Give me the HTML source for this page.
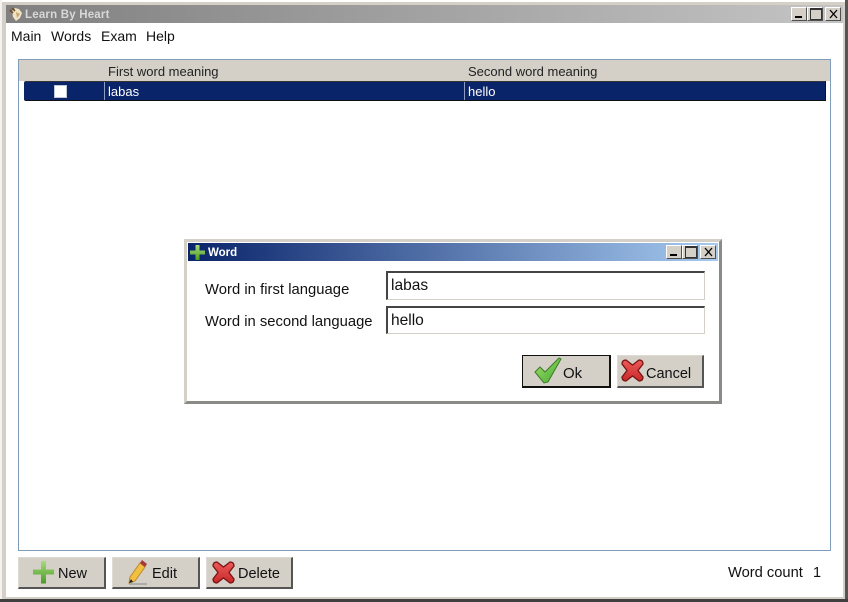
<!DOCTYPE html>
<html><head><meta charset="utf-8"><style>
html,body{margin:0;padding:0;width:848px;height:602px;overflow:hidden;background:#fff}
*{box-sizing:border-box}
div,span{position:absolute;white-space:nowrap}
body{font-family:"Liberation Sans",sans-serif;font-size:14px;color:#111}
.t{line-height:18px;height:18px}
.wb{background:#d4d0c8;border:1px solid;border-color:#fff #505050 #505050 #fff;width:16px;height:14px}
.btn{background:#d4d0c8;border-top:1px solid #dedbd4;border-left:1px solid #dedbd4;border-right:2px solid #555;border-bottom:2px solid #555;height:32px}
svg{position:absolute;overflow:visible}
</style></head><body>
<svg style="left:0;top:0" width="0" height="0"><defs>
<linearGradient id="g" x1="0" y1="0" x2="0" y2="1"><stop offset="0" stop-color="#a6dc78"/><stop offset="1" stop-color="#4a9a28"/></linearGradient>
<linearGradient id="c" x1="0" y1="0" x2="1" y2="1"><stop offset="0" stop-color="#a8e070"/><stop offset="1" stop-color="#3fa82c"/></linearGradient>
<linearGradient id="r" x1="0" y1="0" x2="0" y2="1"><stop offset="0" stop-color="#ee5a5a"/><stop offset="1" stop-color="#c82828"/></linearGradient>
</defs></svg>
<div style="left:0;top:0;width:848px;height:602px;background:#d4d0c8"></div>
<div style="left:0;top:0;width:848px;height:2px;background:#fff"></div>
<div style="left:0;top:0;width:2px;height:602px;background:#f4f3f0"></div>
<div style="left:845px;top:0;width:3px;height:602px;background:#555"></div>
<div style="left:0;top:599px;width:848px;height:3px;background:#404040"></div>
<div style="left:6px;top:5px;width:837px;height:18px;background:linear-gradient(90deg,#808080,#c4c4c4)"></div>
<div style="left:6px;top:23px;width:837px;height:574px;background:#fff"></div>

<svg style="left:8px;top:6px" width="16" height="16" viewBox="0 0 16 16"><path d="M4 5 L7 2 L11 3 L14 7 L12 12 L8 15 L5 11 Z" fill="#efe3c4"/><path d="M2 4 L5 7 M4 2 L7 5" stroke="#6b4a2a" stroke-width="1.600"/><path d="M8 6 L12 8 L9 12Z" fill="#caa46f"/></svg>
<div class="t" style="left:25px;top:6px;font-size:11.500px;font-weight:bold;color:#d8d8d8;line-height:18px;letter-spacing:.2px">Learn By Heart</div>

<div class="wb" style="left:791px;top:7px"><span style="left:3px;top:8px;width:7px;height:2px;background:#000"></span></div>
<div class="wb" style="left:807px;top:7px"><span style="left:2px;top:0;width:12px;height:12px;border:1px solid #333;border-top-width:2px"></span></div>
<div class="wb" style="left:825px;top:7px"><svg style="left:3px;top:2px" width="9" height="8"><path d="M1 0 L8 8 M8 0 L1 8" stroke="#000" stroke-width="1.300"/></svg></div>

<div class="t" style="left:11px;top:27px">Main</div>
<div class="t" style="left:51px;top:27px">Words</div>
<div class="t" style="left:101px;top:27px">Exam</div>
<div class="t" style="left:146px;top:27px">Help</div>

<div style="left:18px;top:59px;width:813px;height:492px;border:1px solid #7f9db9;background:#fff"></div>
<div style="left:19px;top:60px;width:811px;height:21px;background:#d4d0c8"></div>
<div class="t" style="left:108px;top:63px;font-size:13px;color:#222">First word meaning</div>
<div class="t" style="left:468px;top:63px;font-size:13px;color:#222">Second word meaning</div>
<div style="left:24px;top:81px;width:801px;height:20px;background:#0a246a;border-top:1px solid #333;border-bottom:1px solid #111;border-radius:2px 0 0 2px"></div>
<div style="left:104px;top:82px;width:1px;height:18px;background:#8f9cc0"></div>
<div style="left:464px;top:82px;width:1px;height:18px;background:#8f9cc0"></div>
<div style="left:825px;top:81px;width:1px;height:20px;background:#111"></div>
<div style="left:54px;top:85px;width:13px;height:13px;background:#fff;border:1px solid #c0c8d8"></div>
<div class="t" style="left:108px;top:83px;font-size:13px;color:#fff">labas</div>
<div class="t" style="left:468px;top:83px;font-size:13px;color:#fff">hello</div>

<!-- dialog -->
<div style="left:184px;top:239px;width:538px;height:165px;background:#fff;border:3px solid #d4d0c8;border-right:3px solid #8a8a86;border-bottom:3px solid #8a8a86"></div>
<div style="left:188px;top:243px;width:530px;height:18px;background:linear-gradient(90deg,#0a246a,#a6caf0)"></div>
<svg style="left:190px;top:245px" width="15" height="15"><path d="M5.500 0h4v5.500h5.500v4h-5.500v5.500h-4v-5.500h-5.500v-4h5.500z" fill="url(#g)"/></svg>
<div class="t" style="left:208px;top:244px;font-size:11.500px;font-weight:bold;color:#fff">Word</div>
<div class="wb" style="left:666px;top:245px"><span style="left:3px;top:8px;width:7px;height:2px;background:#000"></span></div>
<div class="wb" style="left:682px;top:245px"><span style="left:2px;top:0;width:12px;height:12px;border:1px solid #333;border-top-width:2px"></span></div>
<div class="wb" style="left:700px;top:245px"><svg style="left:3px;top:2px" width="9" height="8"><path d="M1 0 L8 8 M8 0 L1 8" stroke="#000" stroke-width="1.300"/></svg></div>

<div class="t" style="left:205px;top:281px;font-size:14.800px;letter-spacing:.03px">Word in first language</div>
<div class="t" style="left:205px;top:313px;font-size:14.800px">Word in second language</div>
<div style="left:386px;top:271px;width:319px;height:29px;background:#fff;border:1px solid #d4d0c8;border-top:2px solid #444;border-left:2px solid #444"></div>
<div style="left:386px;top:306px;width:319px;height:28px;background:#fff;border:1px solid #d4d0c8;border-top:2px solid #444;border-left:2px solid #444"></div>
<div class="t" style="left:391px;top:277px;font-size:16px;width:40px;transform-origin:0 0;transform:scaleX(.97)">labas</div>
<div class="t" style="left:391px;top:312px;font-size:16px;width:40px;transform-origin:0 0;transform:scaleX(.97)">hello</div>

<div style="left:522px;top:355px;width:89px;height:33px;background:#d4d0c8;border:2px solid #111;border-top-width:1px;border-left-width:1px"></div>
<svg style="left:535px;top:358px" width="27" height="26"><path d="M0 14 L5 9 L10 14 L24 0 L26 1 L13 24 L9 25 Z" fill="url(#c)" stroke="#3c7a28" stroke-width="1"/></svg>
<div class="t" style="left:563px;top:365px;font-size:15px">Ok</div>
<div class="btn" style="left:617px;top:355px;width:87px;height:33px"></div>
<svg style="left:621px;top:359px" width="23" height="23" viewBox="0 0 23 23"><path d="M5 1 L11.500 6 L18 1 Q22 1 22 5 L17 11.500 L22 18 Q22 22 18 22 L11.500 17 L5 22 Q1 22 1 18 L6 11.500 L1 5 Q1 1 5 1 Z" fill="url(#r)" stroke="#7a1414" stroke-width="1.300"/></svg>
<div class="t" style="left:646px;top:365px;font-size:14.500px">Cancel</div>

<!-- bottom buttons -->
<div class="btn" style="left:18px;top:557px;width:88px"></div>
<svg style="left:33px;top:561px" width="21" height="23"><path d="M8 0h5v8.500h8v5h-8v9h-5v-9h-8v-5h8z" fill="url(#g)"/></svg>
<div class="t" style="left:58px;top:565px;font-size:14.500px">New</div>
<div class="btn" style="left:112px;top:557px;width:88px"></div>
<svg style="left:128px;top:560px" width="22" height="25"><path d="M2 17 L12 3 L17 7 L7 21 L1 23 Z" fill="#f0c040" stroke="#c08828" stroke-width="1"/><path d="M12 3 L14 0 L19 4 L17 7Z" fill="#a83838"/><path d="M1 23 L3 19 L5 22Z" fill="#222"/><path d="M1 24 H19" stroke="#888" stroke-width="1"/></svg>
<div class="t" style="left:152px;top:565px;font-size:14.500px">Edit</div>
<div class="btn" style="left:206px;top:557px;width:87px"></div>
<svg style="left:212px;top:561px" width="23" height="23" viewBox="0 0 23 23"><path d="M5 1 L11.500 6 L18 1 Q22 1 22 5 L17 11.500 L22 18 Q22 22 18 22 L11.500 17 L5 22 Q1 22 1 18 L6 11.500 L1 5 Q1 1 5 1 Z" fill="url(#r)" stroke="#7a1414" stroke-width="1.300"/></svg>
<div class="t" style="left:238px;top:565px;font-size:14.500px">Delete</div>

<div class="t" style="left:728px;top:564px;font-size:14.700px">Word count</div>
<div class="t" style="left:813px;top:564px;font-size:14.500px">1</div>
</body></html>
